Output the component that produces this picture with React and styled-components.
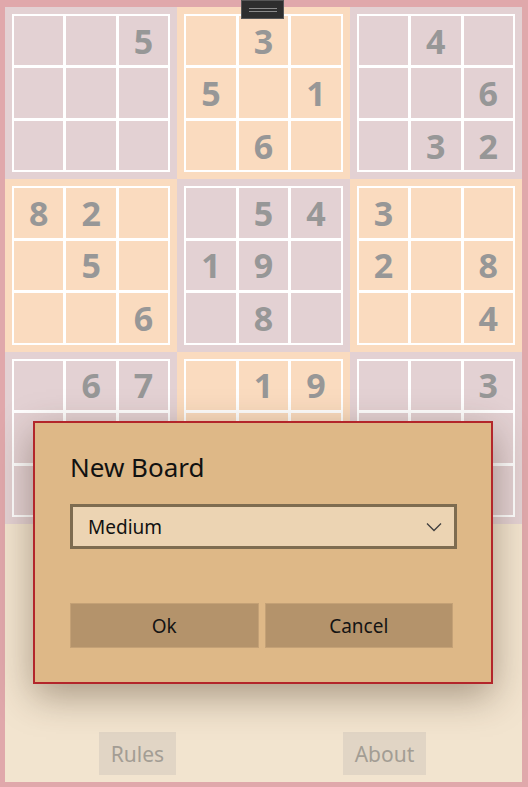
import React from "react";
import styled, { createGlobalStyle } from "styled-components";

const GlobalStyle = createGlobalStyle`
  html, body {
    margin: 0;
    padding: 0;
    background: #f2e4cf;
  }
  * {
    box-sizing: border-box;
  }
`;

const FONT = `"Noto Sans", "Open Sans", "DejaVu Sans", sans-serif`;

const boxes = [
  [null, null, 5, null, null, null, null, null, null],
  [null, 3, null, 5, null, 1, null, 6, null],
  [null, 4, null, null, null, 6, null, 3, 2],
  [8, 2, null, null, 5, null, null, null, 6],
  [null, 5, 4, 1, 9, null, null, 8, null],
  [3, null, null, 2, null, 8, null, null, 4],
  [null, 6, 7, null, null, null, null, null, null],
  [null, 1, 9, null, null, null, null, null, null],
  [null, null, 3, null, null, null, null, null, null],
];

const Window = styled.div`
  position: relative;
  width: 528px;
  height: 787px;
  border-style: solid;
  border-color: #e0a8ab;
  border-width: 7px 6px 5px 5px;
  background: #f2e4cf;
  display: flex;
  flex-direction: column;
  font-family: ${FONT};
`;

const DragHandle = styled.div`
  position: absolute;
  top: -7px;
  left: 236px;
  width: 43px;
  height: 19px;
  background: #2e2e2e;
  border: 1px solid #575757;
  display: flex;
  flex-direction: column;
  justify-content: center;
  align-items: center;
  gap: 2px;
  z-index: 2;

  &::before,
  &::after {
    content: "";
    width: 28px;
    height: 1px;
    background: #8a8a8a;
  }
`;

const Board = styled.div`
  display: grid;
  grid-template-columns: repeat(3, 1fr);
`;

const Box = styled.div`
  aspect-ratio: 1;
  padding: 7px;
  background: ${(p) => (p.$tone === "peach" ? "#fadbbf" : "#e3d1d3")};
`;

const CellGrid = styled.div`
  width: 100%;
  height: 100%;
  display: grid;
  grid-template-columns: repeat(3, 1fr);
  grid-template-rows: repeat(3, 1fr);
  gap: 3px;
  padding: 2px;
  background: #ffffff;
`;

const Cell = styled.div`
  background: ${(p) => (p.$tone === "peach" ? "#fadbbf" : "#e3d1d3")};
  display: flex;
  align-items: center;
  justify-content: center;
  font-size: 34px;
  font-weight: 700;
  color: #979797;
  line-height: 1;
`;

const Footer = styled.div`
  flex: 1;
  display: grid;
  grid-template-columns: 1fr 1fr;
  align-items: end;
  justify-items: center;
  padding: 0 14px 7px 9px;
`;

const FooterButton = styled.button`
  height: 43px;
  padding: 0 12px;
  border: none;
  background: #e1d5c5;
  color: #a39d94;
  font-family: ${FONT};
  font-size: 21px;
`;

const Dialog = styled.div`
  position: absolute;
  left: 28px;
  top: 414px;
  width: 460px;
  height: 263px;
  background: #deb887;
  border: 2px solid #b3262b;
  box-shadow: 0 12px 36px rgba(60, 40, 20, 0.4);
  padding: 26px 0 0 35px;
  display: flex;
  flex-direction: column;
`;

const Title = styled.div`
  font-size: 26px;
  color: #111111;
  line-height: 36px;
  margin-bottom: 19px;
`;

const Select = styled.div`
  width: 387px;
  height: 45px;
  border: 3px solid #7e6c50;
  background: #ecd4b3;
  display: flex;
  align-items: center;
  justify-content: space-between;
  padding: 0 12px 0 15px;
  font-size: 19px;
  color: #111111;
`;

const ButtonRow = styled.div`
  width: 383px;
  margin-top: 54px;
  display: grid;
  grid-template-columns: 1fr 1fr;
  gap: 6px;
`;

const DialogButton = styled.button`
  height: 45px;
  border: 1px solid #c4a176;
  background: #b4936b;
  color: #141414;
  font-family: ${FONT};
  font-size: 19px;
`;

const Chevron = () => (
  <svg width="16" height="10" viewBox="0 0 16 10" fill="none">
    <path d="M1 1.5 L8 8.5 L15 1.5" stroke="#3f3f3f" strokeWidth="1.3" />
  </svg>
);

export default function App() {
  return (
    <>
      <GlobalStyle />
      <Window>
        <DragHandle />
        <Board>
          {boxes.map((cells, b) => {
            const tone = b % 2 === 1 ? "peach" : "mauve";
            return (
              <Box key={b} $tone={tone}>
                <CellGrid>
                  {cells.map((v, i) => (
                    <Cell key={i} $tone={tone}>
                      {v}
                    </Cell>
                  ))}
                </CellGrid>
              </Box>
            );
          })}
        </Board>
        <Footer>
          <FooterButton>Rules</FooterButton>
          <FooterButton>About</FooterButton>
        </Footer>
        <Dialog>
          <Title>New Board</Title>
          <Select>
            <span>Medium</span>
            <Chevron />
          </Select>
          <ButtonRow>
            <DialogButton>Ok</DialogButton>
            <DialogButton>Cancel</DialogButton>
          </ButtonRow>
        </Dialog>
      </Window>
    </>
  );
}
